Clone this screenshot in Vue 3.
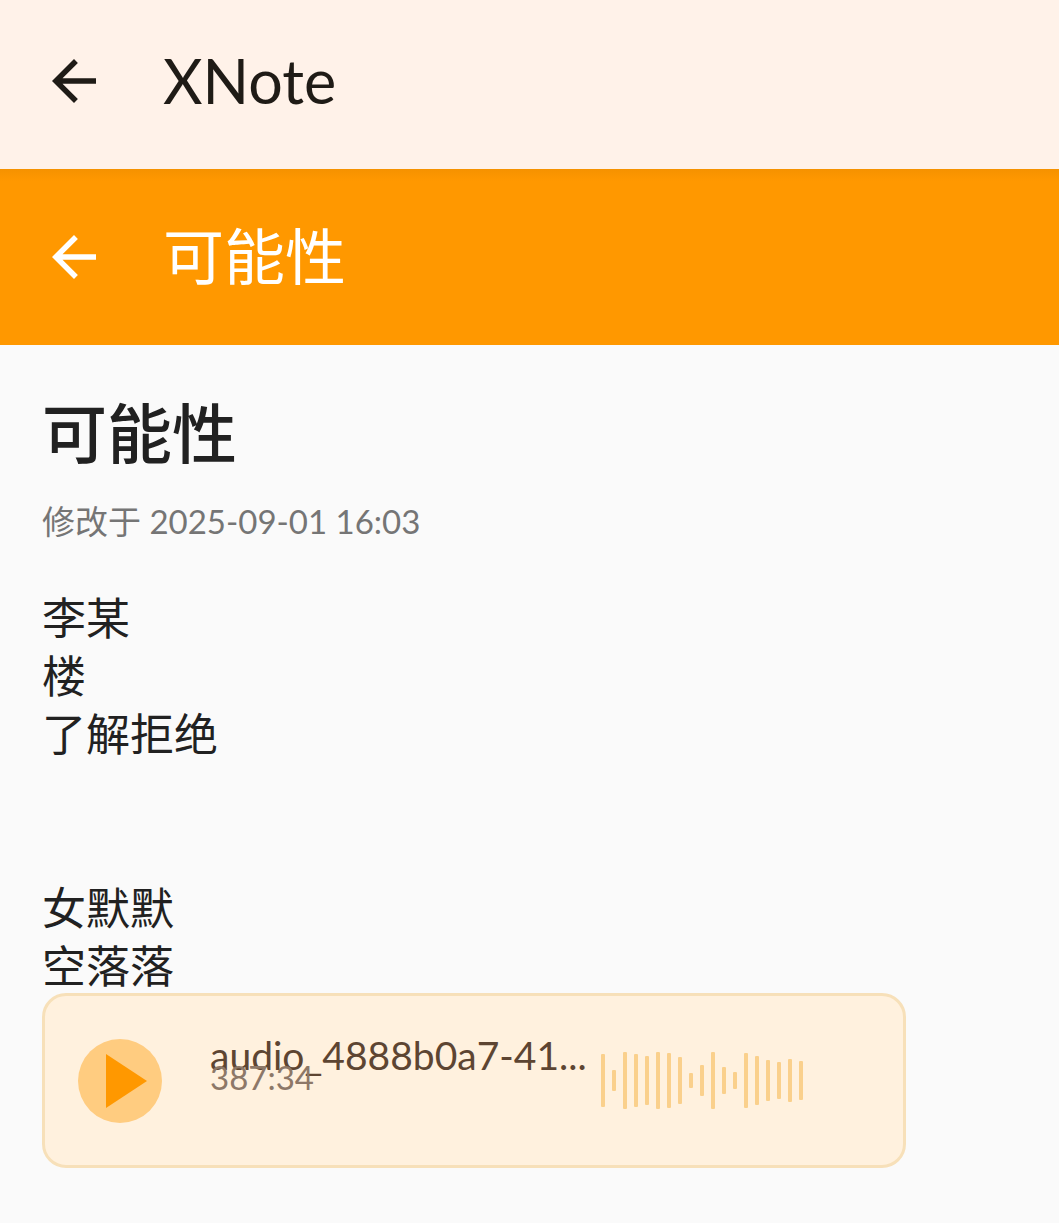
<script setup>
const noteLines = ['李某', '楼', '了解拒绝', '', '', '女默默', '空落落']
const levels = [53, 21, 57, 53, 49, 57, 55, 47, 15, 31, 57, 27, 17, 55, 49, 41, 37, 43, 39]
</script>

<template>
  <div class="page">
    <header class="bar bar-app">
      <button class="back" type="button" aria-label="Back">
        <svg viewBox="0 0 24 24" aria-hidden="true">
          <path d="M20 11H7.83l5.59-5.59L12 4l-8 8 8 8 1.41-1.41L7.83 13H20v-2z" />
        </svg>
      </button>
      <span class="bar-title">XNote</span>
    </header>

    <header class="bar bar-note">
      <button class="back" type="button" aria-label="返回">
        <svg viewBox="0 0 24 24" aria-hidden="true">
          <path d="M20 11H7.83l5.59-5.59L12 4l-8 8 8 8 1.41-1.41L7.83 13H20v-2z" />
        </svg>
      </button>
      <span class="bar-title">可能性</span>
    </header>

    <main class="note">
      <h1>可能性</h1>
      <p class="meta">修改于 2025-09-01 16:03</p>
      <div class="body">
        <p v-for="(line, i) in noteLines" :key="i">{{ line }}</p>
      </div>

      <section class="audio">
        <button class="play" type="button" aria-label="播放">
          <svg viewBox="0 0 84 84" aria-hidden="true">
            <path d="M28 15L69 42L28 69z" />
          </svg>
        </button>
        <div class="info">
          <span class="name">audio_4888b0a7-41...</span>
          <span class="time">387:34</span>
        </div>
        <div class="wave" aria-hidden="true">
          <i v-for="(h, i) in levels" :key="i" :style="{ height: h + 'px' }"></i>
        </div>
      </section>
    </main>
  </div>
</template>

<style>
body {
  margin: 0;
  background: #fafafa;
}
</style>

<style scoped>
.page {
  min-height: 100vh;
  background: #fafafa;
  color: #212121;
  font-family: Lato, "Noto Sans CJK SC", sans-serif;
}

.bar {
  display: flex;
  align-items: center;
  gap: 56px;
  padding: 44px 41px;
}

.bar-app {
  padding-top: 37px;
  background: #fff2e9;
  color: #1f1b16;
}

.bar-note {
  background: linear-gradient(#f59200, #ff9800 12px);
  color: #fff;
}

.back {
  display: flex;
  padding: 0;
  border: 0;
  background: none;
  color: inherit;
}

.back svg {
  width: 66px;
  height: 66px;
  fill: currentColor;
}

.bar-title {
  font-size: 61px;
  line-height: 88px;
}

.note {
  padding: 40px 42px;
}

h1 {
  margin: 0;
  font-size: 65px;
  font-weight: 500;
  line-height: 96px;
}

.meta {
  margin: 16px 0 44px;
  color: #757575;
  font-size: 33px;
  line-height: 48px;
}

.body p {
  min-height: 58px;
  margin: 0;
  font-size: 44px;
  line-height: 58px;
}

.audio {
  display: flex;
  align-items: center;
  box-sizing: border-box;
  max-width: 864px;
  min-height: 175px;
  margin-top: -2px;
  padding: 0 100px 0 33px;
  border: 3px solid #f7e0b9;
  border-radius: 24px;
  background: #fff1de;
}

.play {
  flex: none;
  width: 84px;
  height: 84px;
  padding: 0;
  border: 0;
  border-radius: 50%;
  background: #ffcc80;
}

.play svg {
  display: block;
  fill: #ff9800;
}

.info {
  display: flex;
  flex: 1;
  flex-direction: column;
  min-width: 0;
  margin-left: 48px;
  padding-bottom: 28px;
  white-space: nowrap;
}

.name {
  color: #5d4532;
  font-size: 39px;
  line-height: 20px;
}

.time {
  color: #8d7868;
  font-size: 33px;
  line-height: 24px;
}

.wave {
  display: flex;
  align-items: center;
  gap: 7px;
}

.wave i {
  width: 4px;
  border-radius: 1px;
  background: #fad08c;
}
</style>
